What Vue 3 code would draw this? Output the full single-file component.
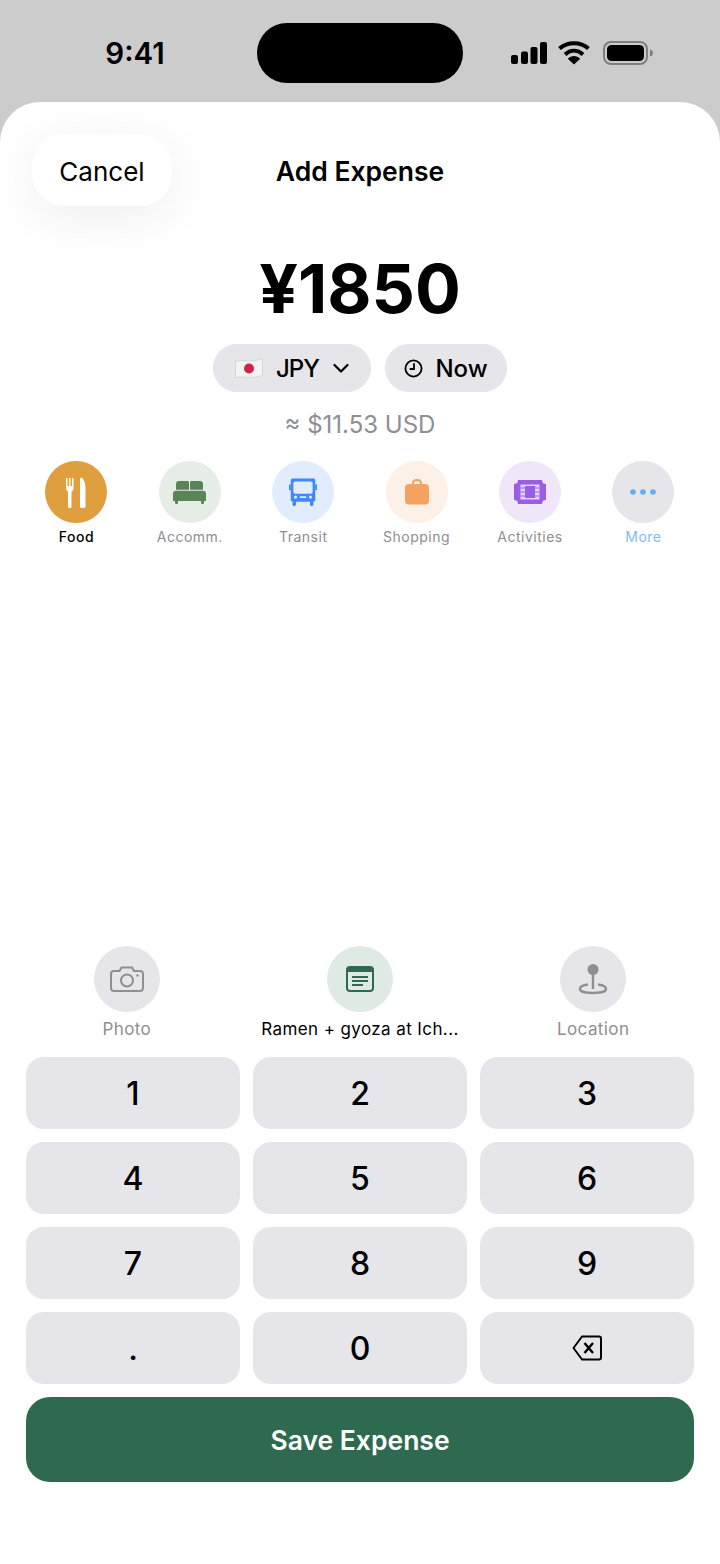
<script setup>
import { ref } from 'vue'

const amount = ref('1850')
const activeCategory = ref('Food')

const categories = [
  { name: 'Food', bg: '#e09f3e', icon: 'food' },
  { name: 'Accomm.', bg: '#e6ede7', icon: 'bed' },
  { name: 'Transit', bg: '#e1ecff', icon: 'bus' },
  { name: 'Shopping', bg: '#fdf0e6', icon: 'bag' },
  { name: 'Activities', bg: '#f0e6fa', icon: 'film' },
  { name: 'More', bg: '#e5e5ea', icon: 'more' }
]

const keys = ['1', '2', '3', '4', '5', '6', '7', '8', '9', '.', '0', 'back']

function press(key) {
  if (key === 'back') {
    amount.value = amount.value.slice(0, -1)
  } else {
    amount.value += key
  }
}
</script>

<template>
  <div class="screen">
    <div class="status">
      <span class="time">9:41</span>
      <div class="island"></div>
      <div class="status-icons">
        <svg width="36" height="24" viewBox="0 0 36 24">
          <rect x="0" y="14" width="7" height="9" rx="2" fill="#000" />
          <rect x="10" y="10.500" width="7" height="12.500" rx="2" fill="#000" />
          <rect x="19.500" y="6" width="7" height="17" rx="2" fill="#000" />
          <rect x="29" y="1" width="7" height="22" rx="2" fill="#000" />
        </svg>
        <svg class="wifi" width="32" height="24" viewBox="0 0 32 24">
          <path d="M1.500 7.500C9.500 .5 22.500 .5 30.500 7.500" fill="none" stroke="#000" stroke-width="4" />
          <path d="M7 13.500C12.500 8.500 19.500 8.500 25 13.500" fill="none" stroke="#000" stroke-width="4" />
          <path d="M16 23.500L9.800 17.800C13.500 14.200 18.500 14.200 22.200 17.800Z" fill="#000" />
        </svg>
        <svg class="battery" width="50" height="24" viewBox="0 0 50 24">
          <rect x="1" y="1" width="43" height="22" rx="7" fill="none" stroke="#7f7f7f" stroke-width="2" />
          <rect x="4" y="4" width="37" height="16" rx="4.500" fill="#000" />
          <path d="M47 8.500C49 9 50 10.500 50 12C50 13.500 49 15 47 15.500Z" fill="#7f7f7f" />
        </svg>
      </div>
    </div>

    <div class="sheet">
      <div class="head">
        <button class="cancel">Cancel</button>
        <span class="title">Add Expense</span>
      </div>

      <div class="amount">¥{{ amount }}</div>

      <div class="chips">
        <button class="chip chip-currency">
          <svg width="28" height="21" viewBox="0 0 28 21">
            <path d="M.5 3C7 1.500 13 3.800 19 2.800C22.500 2.200 25.500 1.200 27.500 1V17.500C25.500 17.700 22.500 18.700 19 19.300C13 20.300 7 18 .5 19.500Z" fill="#f4f3f1" stroke="#d2d2d4" stroke-width=".8" />
            <circle cx="14" cy="10.500" r="5" fill="#d0224b" />
          </svg>
          <span class="code">JPY</span>
          <svg width="16" height="11" viewBox="0 0 16 11">
            <path d="M1.500 2L8 8.500L14.500 2" fill="none" stroke="#000" stroke-width="2.200" stroke-linecap="round" stroke-linejoin="round" />
          </svg>
        </button>
        <button class="chip chip-time">
          <svg width="19" height="19" viewBox="0 0 20 20">
            <circle cx="10" cy="10" r="8.500" fill="none" stroke="#000" stroke-width="1.900" />
            <path d="M10.500 4.500V10.500H6" fill="none" stroke="#000" stroke-width="1.900" />
          </svg>
          <span>Now</span>
        </button>
      </div>

      <div class="converted">≈ $11.53 USD</div>

      <div class="categories">
        <div v-for="c in categories" :key="c.name" class="category">
          <div class="cat-circle" :style="{ background: c.bg }">
            <svg v-if="c.icon === 'food'" width="20" height="31" viewBox="0 0 20 31" fill="#fff">
              <path d="M0 1H1.500V9H3V1H4.500V9H6V1H7.500V11C7.500 13 6.500 14 5.500 14.500V29.500C5.500 30.500 5 31 3.700 31C2.500 31 2 30.500 2 29.500V14.500C1 14 0 13 0 11Z" />
              <path d="M14 29.500V2C14 1 15 .5 16 1C18.500 2.500 19.500 7.500 19.500 12.500V29.500C19.500 30.500 18.700 31 16.700 31C14.800 31 14 30.500 14 29.500Z" />
            </svg>
            <svg v-else-if="c.icon === 'bed'" width="33" height="23" viewBox="0 0 33 23" fill="#5a8457">
              <path d="M3 3C3 1 4 0 6 0H14.500C15.700 0 16 .8 16 2V8.800H3Z" />
              <path d="M30 3C30 1 29 0 27 0H18.500C17.300 0 17 .8 17 2V8.800H30Z" />
              <path d="M0 12.500C0 10.500 1.500 9.800 3 9.800H30C31.500 9.800 33 10.500 33 12.500V20H31V21.500C31 22.500 30.500 23 29.500 23C28.500 23 28 22.500 28 21.500V20H5V21.500C5 22.500 4.500 23 3.500 23C2.500 23 2 22.500 2 21.500V20H0Z" />
            </svg>
            <svg v-else-if="c.icon === 'bus'" width="28" height="30" viewBox="0 0 32 34">
              <path d="M4 1.500H28C29.500 1.500 30 2.500 30 4V26C30 27 29.500 27.500 28 27.500V31C28 32.500 27 33 26 33C24.500 33 24 32.500 24 31V28H8V31C8 32.500 7 33 6 33C4.500 33 4 32.500 4 31V27.500C2.500 27.500 2 27 2 26V4C2 2.500 2.500 1.500 4 1.500Z" fill="#3f87ff" />
              <rect x="5" y="5" width="22" height="14" rx="2" fill="#e1ecff" />
              <rect x="0" y="8" width="2" height="7" rx="1" fill="#3f87ff" />
              <rect x="30" y="8" width="2" height="7" rx="1" fill="#3f87ff" />
              <circle cx="7.500" cy="22.800" r="1.800" fill="#e1ecff" />
              <circle cx="24.500" cy="22.800" r="1.800" fill="#e1ecff" />
              <rect x="12" y="21.800" width="8" height="2" rx="1" fill="#e1ecff" />
            </svg>
            <svg v-else-if="c.icon === 'bag'" width="24" height="26" viewBox="0 0 24 26">
              <path d="M8 5V4C8 2 9.500 1 12 1C14.500 1 16 2 16 4V5" fill="none" stroke="#f4a261" stroke-width="2" />
              <rect x="0" y="5" width="24" height="20.500" rx="4" fill="#f4a261" />
            </svg>
            <svg v-else-if="c.icon === 'film'" width="32" height="24" viewBox="0 0 32 24">
              <path d="M4 0H28L28.500 2.500C29 3.300 30 3.700 32 4V20C30 20.300 29 20.700 28.500 21.500L28 24H4L3.500 21.500C3 20.700 2 20.300 0 20V4C2 3.700 3 3.300 3.500 2.500Z" fill="#9b5de5" />
              <rect x="6.500" y="4.500" width="19" height="15" fill="#e3d2f8" />
              <rect x="11" y="6" width="10" height="12" fill="#9b5de5" />
              <path d="M6.500 8H11M6.500 12H11M6.500 16H11M21 8H25.500M21 12H25.500M21 16H25.500" stroke="#9b5de5" stroke-width="1" />
            </svg>
            <svg v-else width="26" height="6" viewBox="0 0 26 6" fill="#64aef0">
              <circle cx="3" cy="3" r="2.800" />
              <circle cx="13" cy="3" r="2.800" />
              <circle cx="23" cy="3" r="2.800" />
            </svg>
          </div>
          <span class="cat-label" :class="{ active: c.name === activeCategory, more: c.name === 'More' }">{{ c.name }}</span>
        </div>
      </div>

      <div class="actions">
        <div class="action">
          <div class="action-circle">
            <svg width="34" height="26" viewBox="0 0 34 26" fill="none" stroke="#8e8e93" stroke-width="2">
              <path d="M4 5H9.500L11.500 1.500H22L24 5H30C32 5 33 6 33 8V22C33 24 32 25 30 25H4C2 25 1 24 1 22V8C1 6 2 5 4 5Z" />
              <circle cx="17" cy="14.500" r="6" />
              <circle cx="27.500" cy="9.500" r="1.300" fill="#8e8e93" stroke="none" />
            </svg>
          </div>
          <span class="action-label">Photo</span>
        </div>
        <div class="action">
          <div class="action-circle note">
            <svg width="28" height="26" viewBox="0 0 28 26">
              <rect x="1" y="1" width="26" height="24" rx="3" fill="none" stroke="#2d6a4f" stroke-width="2" />
              <path d="M1 4C1 2 2 1 4 1H24C26 1 27 2 27 4V6H1Z" fill="#2d6a4f" />
              <path d="M6 11H22M6 15H22M6 19H17" stroke="#2d6a4f" stroke-width="1.800" />
            </svg>
          </div>
          <span class="action-label filled">Ramen + gyoza at Ich...</span>
        </div>
        <div class="action">
          <div class="action-circle">
            <svg width="30" height="32" viewBox="0 0 30 32" fill="none">
              <circle cx="15" cy="6.500" r="5.500" fill="#8e8e93" />
              <path d="M15 10V26" stroke="#8e8e93" stroke-width="2.400" />
              <path d="M10 21.500C5 22 2 23.800 2 26C2 28.500 7.500 30 15 30C22.500 30 28 28.500 28 26C28 23.800 25 22 20 21.500" stroke="#8e8e93" stroke-width="2.400" />
            </svg>
          </div>
          <span class="action-label">Location</span>
        </div>
      </div>

      <div class="keypad">
        <button v-for="k in keys" :key="k" class="key" @click="press(k)">
          <svg v-if="k === 'back'" width="30" height="26" viewBox="0 0 30 26" fill="none" stroke="#000" stroke-width="2">
            <path d="M10 1.500H27C28 1.500 29 2.500 29 3.500V22.500C29 23.500 28 24.500 27 24.500H10L1.500 13Z" stroke-linejoin="round" />
            <path d="M12.500 8L21 18M21 8L12.500 18" stroke-width="2.400" />
          </svg>
          <template v-else>{{ k }}</template>
        </button>
      </div>

      <button class="save">Save Expense</button>
    </div>
  </div>
</template>

<style>
html, body {
  margin: 0;
  background: #cccccc;
}
</style>

<style scoped>
.screen {
  width: 720px;
  height: 1564px;
  display: flex;
  flex-direction: column;
  background: #cccccc;
  font-family: Inter, "Liberation Sans", sans-serif;
  color: #000;
  overflow: hidden;
}
button {
  font-family: inherit;
  border: none;
  color: #000;
  padding: 0;
}
.status {
  height: 102px;
  flex: none;
  display: grid;
  grid-template-columns: 1fr 206px 1fr;
  align-items: center;
  box-sizing: border-box;
}
.time {
  font-size: 29.500px;
  font-weight: 600;
  text-align: center;
  padding-left: 13px;
  transform: translateY(2px);
}
.island {
  height: 60px;
  background: #000;
  border-radius: 30px;
  transform: translateY(2px);
}
.status-icons {
  display: flex;
  align-items: center;
  padding-left: 48px;
  transform: translateY(2px);
}
.wifi {
  margin-left: 11px;
}
.battery {
  margin-left: 13px;
}
.sheet {
  flex: 1;
  background: #fff;
  border-radius: 40px 40px 0 0;
  display: flex;
  flex-direction: column;
  align-items: center;
  padding: 32px 26px 0;
  box-sizing: border-box;
}
.head {
  width: 100%;
  display: grid;
  grid-template-columns: 1fr auto 1fr;
  align-items: center;
}
.cancel {
  width: 140px;
  height: 72px;
  margin-left: 6px;
  padding-top: 2px;
  border-radius: 32px;
  background: #fff;
  font-size: 26px;
  box-shadow: 0 10px 50px rgba(0, 0, 0, 0.07);
}
.title {
  padding-top: 2px;
  font-size: 26.500px;
  font-weight: 600;
}
.amount {
  margin-top: 43px;
  font-size: 68px;
  line-height: 78px;
  font-weight: 700;
}
.chips {
  margin-top: 17px;
  display: flex;
  gap: 14px;
}
.chip {
  height: 48px;
  border-radius: 24px;
  background: #e5e5ea;
  display: flex;
  align-items: center;
  justify-content: center;
  font-size: 24px;
  font-weight: 500;
}
.chip-currency {
  width: 158px;
  gap: 13.500px;
}
.code {
  letter-spacing: -1px;
  margin-right: 1px;
}
.chip-time {
  width: 122px;
  gap: 12px;
}
.converted {
  margin-top: 17px;
  font-size: 24px;
  line-height: 32px;
  color: #8e8e93;
}
.categories {
  margin-top: 20px;
  width: 100%;
  padding-right: 0.200px;
  box-sizing: border-box;
  display: grid;
  grid-template-columns: repeat(6, 113.400px);
  justify-content: center;
}
.category {
  display: flex;
  flex-direction: column;
  align-items: center;
  gap: 5px;
}
.cat-circle {
  width: 62px;
  height: 62px;
  border-radius: 50%;
  display: flex;
  align-items: center;
  justify-content: center;
}
.cat-label {
  font-size: 14px;
  line-height: 18px;
  letter-spacing: 0.5px;
  color: #8e8e93;
}
.cat-label.active {
  color: #000;
  font-weight: 500;
}
.cat-label.more {
  color: #7ebcf5;
}
.actions {
  margin-top: auto;
  width: 100%;
  display: grid;
  grid-template-columns: repeat(3, 233.200px);
  justify-content: center;
}
.action {
  display: flex;
  flex-direction: column;
  align-items: center;
  gap: 6px;
}
.action-circle {
  width: 66px;
  height: 66px;
  border-radius: 50%;
  background: #e5e5ea;
  display: flex;
  align-items: center;
  justify-content: center;
}
.action-circle.note {
  background: #e0eae5;
}
.action-label {
  font-size: 17px;
  line-height: 22px;
  letter-spacing: 0.4px;
  color: #8e8e93;
}
.action-label.filled {
  color: #000;
}
.keypad {
  margin-top: 17px;
  width: 100%;
  display: grid;
  grid-template-columns: repeat(3, 1fr);
  gap: 13px;
}
.key {
  height: 72px;
  border-radius: 18px;
  background: #e5e5ea;
  font-size: 32px;
  font-weight: 500;
  display: flex;
  align-items: center;
  justify-content: center;
}
.save {
  margin-top: 13px;
  margin-bottom: 82px;
  width: 100%;
  height: 85px;
  flex: none;
  border-radius: 24px;
  background: #2d6a4f;
  color: #fff;
  font-size: 26.500px;
  font-weight: 600;
}
</style>
